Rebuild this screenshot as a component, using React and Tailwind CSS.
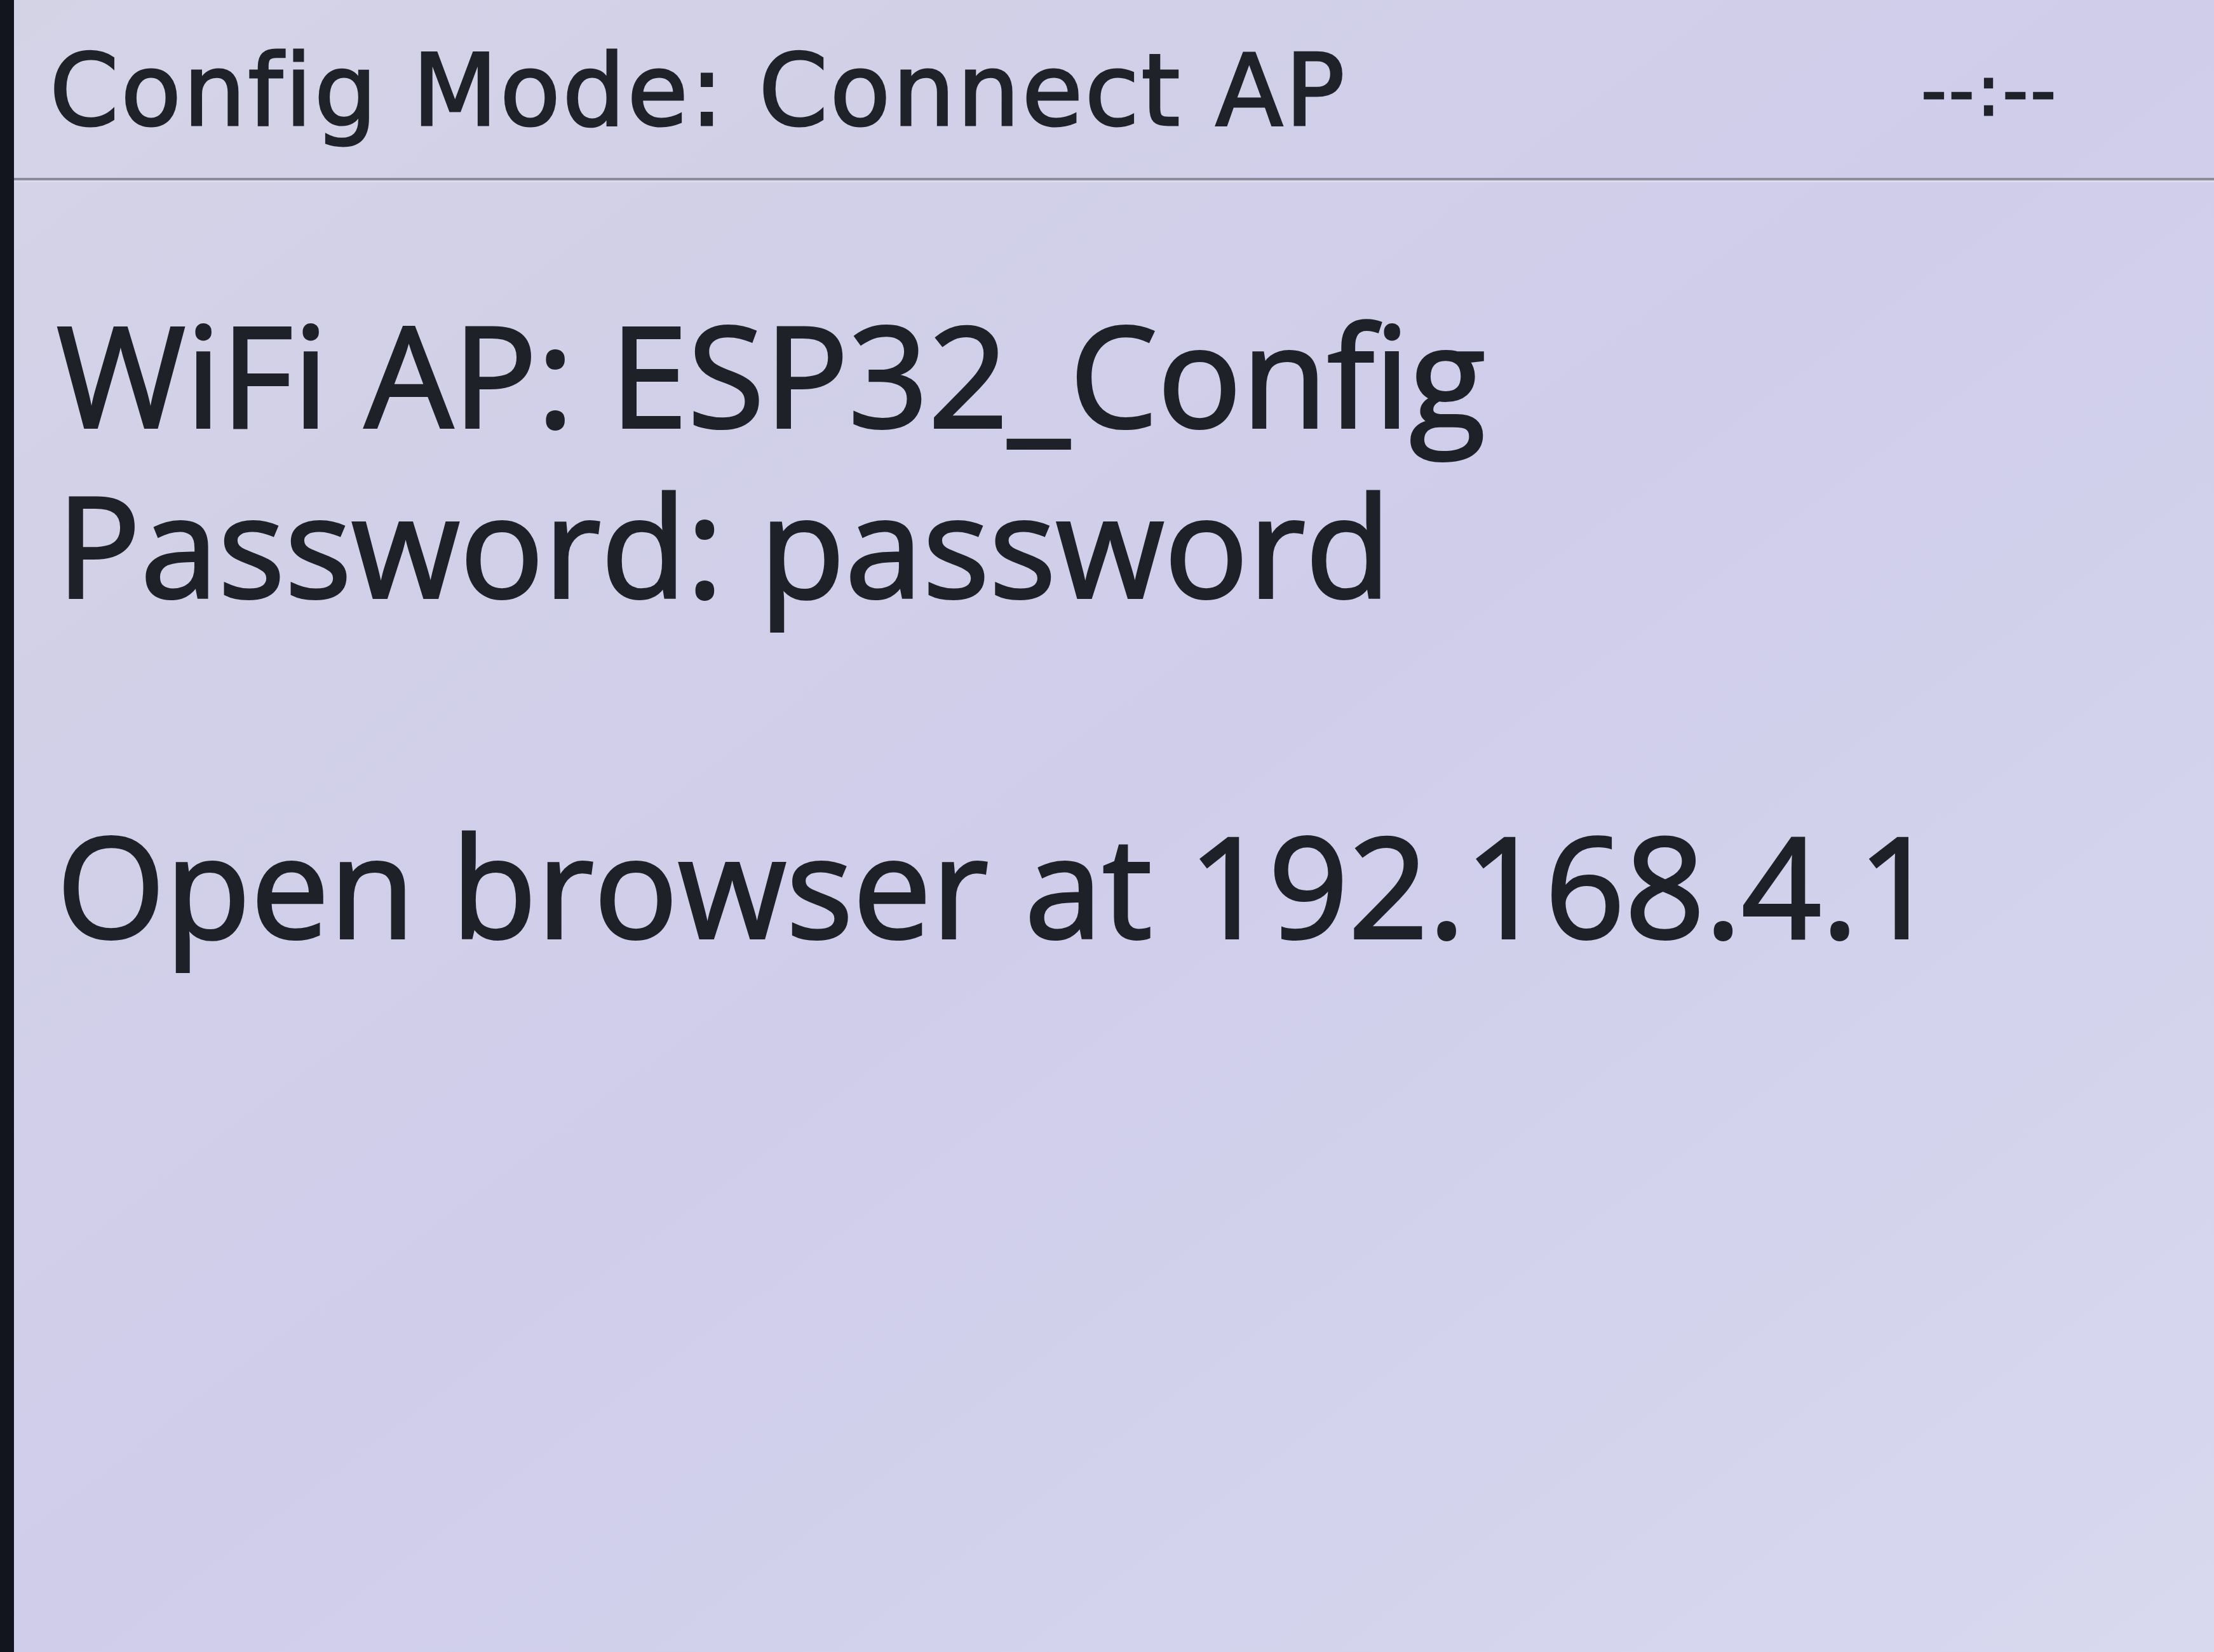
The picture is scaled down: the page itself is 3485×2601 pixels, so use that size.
export default function App() {
  return (
    <div className="w-[3485px] h-[2601px] flex overflow-hidden bg-[#0f121a]">
      <div className="w-[22px] h-full bg-[#12151d] shrink-0" />
      <div className="flex-1 h-full flex flex-col bg-linear-to-br from-[#d4d3e6] via-[#cfcdea] to-[#d8d8ef]">
        <div className="h-[280px] flex items-center justify-between pl-[56px] pr-[245px] pt-[6px]">
          <span className="text-[#1f2329] text-[156px] leading-none tracking-[3px] font-['DejaVu_Sans',sans-serif] [-webkit-text-stroke:3px_#1f2329]">
            Config Mode: Connect AP
          </span>
          <span className="text-[#1f2329] text-[110px] leading-none tracking-[4px] font-['DejaVu_Sans',sans-serif] [-webkit-text-stroke:3px_#1f2329]">
            --:--
          </span>
        </div>
        <div className="h-[7px] bg-[#8c8b9c] border-b-[3px] border-[#dcdbee]" />
        <div className="flex flex-col pl-[67px] pt-[167px] text-[#1e2127] text-[220px] leading-[268px] font-['Open_Sans',sans-serif] [-webkit-text-stroke:4px_#1e2127]">
          <div>WiFi AP: ESP32_Config</div>
          <div>Password: password</div>
          <div className="h-[268px]" />
          <div>Open browser at 192.168.4.1</div>
        </div>
      </div>
    </div>
  );
}
